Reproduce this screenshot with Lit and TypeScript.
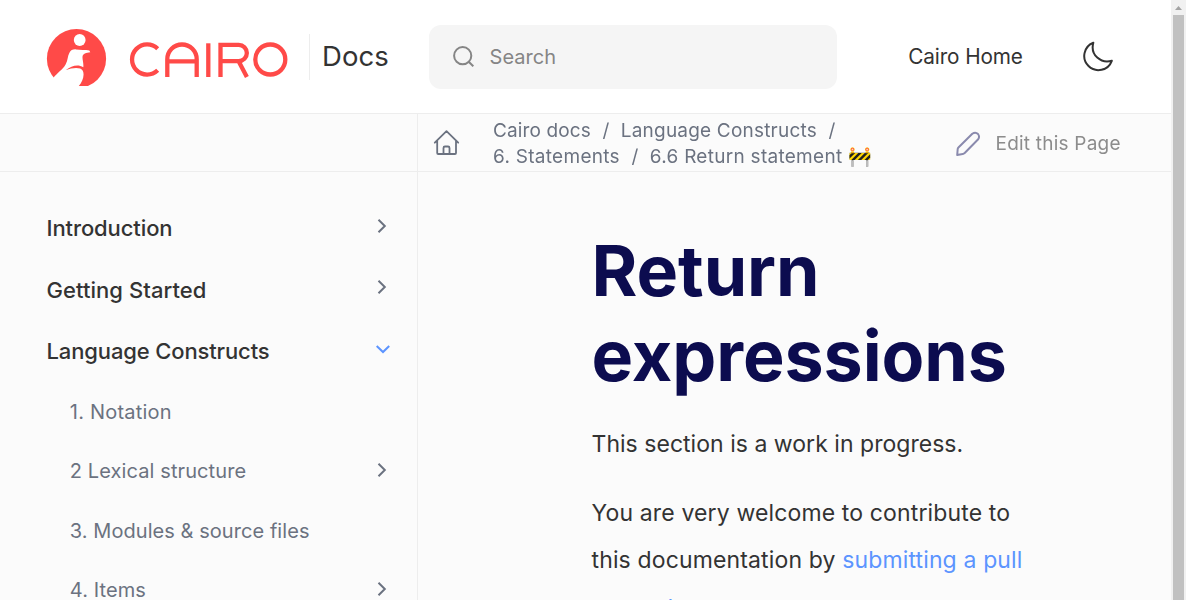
import { LitElement, html, css, svg } from "lit";
import { customElement } from "lit/decorators.js";
import { styleMap } from "lit/directives/style-map.js";

type NavItem = { label: string; level: 1 | 2; state?: "closed" | "open"; track: number };

const NAV: NavItem[] = [
  { label: "Introduction", level: 1, state: "closed", track: -0.1 },
  { label: "Getting Started", level: 1, state: "closed", track: 0.06 },
  { label: "Language Constructs", level: 1, state: "open", track: -0.13 },
  { label: "1. Notation", level: 2, track: 0.22 },
  { label: "2 Lexical structure", level: 2, state: "closed", track: 0.1 },
  { label: "3. Modules & source files", level: 2, track: 0.06 },
  { label: "4. Items", level: 2, state: "closed", track: 0.1 },
];

const logo = svg`
  <circle cx="30.500" cy="29.700" r="29.600" fill="#ff4a48"/>
  <path fill="#fff" d="M0 60L7.300 49C10.500 44.500 17 40.500 19.700 35.300C22 31 21.500 27 23.300 24C24.700 21 27 20.200 30 20.400C34 21.300 39.500 20.200 43.300 21.600L44.300 23.300C40 23.700 37 24.500 36.500 27.700C36.300 31 37.800 34.500 37.300 38.200C31.500 34.800 25.500 37 19.700 41.300C25 39 30.500 38.300 34.200 39.500C40 42 37.500 51.500 32.800 57V60Z"/>
  <circle cx="33.700" cy="11" r="5.900" fill="#fff"/>
  <g fill="none" stroke="#ff4a48" stroke-width="4.300">
    <path d="M111.700 19.700A15.100 15.100 0 1 0 111.700 41.300"/>
    <path d="M121.300 48V30.200A14.700 14.700 0 0 1 150.700 30.200V48M121.300 32.300H150.700"/>
    <path d="M162.300 14.300V48"/>
    <path d="M174.500 48V15.900H192.700A8.150 8.150 0 0 1 192.700 32.200H174.500M193 33L200.900 48"/>
    <circle cx="224.300" cy="30.500" r="15"/>
  </g>`;

@customElement("app-root")
export class AppRoot extends LitElement {
  static styles = css`
    :host {
      display: flex;
      height: 600px;
      overflow: hidden;
      font-family: Inter, sans-serif;
      color: #333;
      background: #fbfbfb;
    }
    * { box-sizing: border-box; }
    svg { display: block; flex: none; }
    a { color: inherit; text-decoration: none; }
    .page { width: 1171px; height: 600px; display: flex; flex-direction: column; }
    .header {
      height: 114px; flex: none; display: flex; align-items: center;
      background: #fff; border-bottom: 1px solid #ededed;
      padding-left: 46px;
    }
    .logo { margin-top: 2px; }
    .docs {
      margin-left: 21px; height: 46px; width: 120px; padding-left: 12px;
      border-left: 1px solid #ededed; font-size: 27.500px; line-height: 44px;
      letter-spacing: 0.1px; white-space: nowrap;
    }
    .search {
      width: 408px; height: 64px; border-radius: 12px; background: #f5f5f5;
      display: flex; align-items: center; padding-left: 24px; gap: 15.500px;
      color: #858585; font-size: 20px; letter-spacing: 0.05px;
    }
    .home { margin-left: 71.300px; width: 173.700px; font-size: 20.750px; letter-spacing: -0.12px; white-space: nowrap; }
    .moon { margin-bottom: 1px; }
    .body { flex: 1; min-height: 0; display: flex; }
    .side { width: 418px; flex: none; border-right: 1px solid #ededed; }
    .side-top { height: 58px; border-bottom: 1px solid #ededed; }
    .nav { padding: 25.500px 27px 0 46.500px; }
    .item {
      display: flex; justify-content: space-between; align-items: center;
      height: 61.500px; font-size: 22px; font-weight: 500; white-space: nowrap;
    }
    .item svg { margin-top: -5px; }
    .sub { height: 59.550px; padding-left: 23.300px; font-size: 20px; font-weight: 400; color: #6b7280; }
    .sub svg { margin-top: -3px; }
    .main { flex: 1; min-width: 0; }
    .toolbar {
      height: 58px; border-bottom: 1px solid #ededed; display: flex; align-items: center;
      padding-left: 15px; color: #6b7280; font-size: 19px; will-change: transform;
    }
    .crumbs { width: 462px; margin: 2px 0 0 32px; line-height: 26px; white-space: nowrap; }
    .c1 { letter-spacing: 0.13px; }
    .c2 { letter-spacing: 0.2px; }
    .c3 { letter-spacing: 0.28px; }
    .sep { margin: 0 11.500px; }
    .edit { display: flex; align-items: center; gap: 14.500px; color: #8c8c8c; letter-spacing: 0.22px; white-space: nowrap; }
    .edit span { margin-top: 2px; }
    .article { padding: 57px 120px 0 173.500px; }
    .title { margin: 0; font-size: 69.900px; line-height: 84.600px; font-weight: 700; color: #0c0c4f; letter-spacing: -0.05px; }
    .text { margin: 22px 0 0; font-size: 23px; line-height: 47px; letter-spacing: 0.14px; }
    .intro { margin-top: 23px; letter-spacing: 0.03px; }
    .link { color: #5c94ff; }
    .scroll { width: 15px; height: 600px; background: #f1f1f1; display: flex; flex-direction: column; align-items: center; }
    .thumb { width: 11px; flex: 1; background: #c1c1c1; }
  `;

  private chevron(state: "closed" | "open") {
    return state === "open"
      ? html`<svg width="16" height="16" viewBox="0 0 16 16"><path d="M2.700 5L9 11L15.200 5" fill="none" stroke="#5c94ff" stroke-width="2"/></svg>`
      : html`<svg width="16" height="16" viewBox="0 0 16 16"><path d="M4.500 1.800L10.800 8L4.500 14.200" fill="none" stroke="#6b7280" stroke-width="2"/></svg>`;
  }

  render() {
    return html`
      <div class="page">
        <header class="header">
          <svg class="logo" width="242" height="57" viewBox="0 0 242 57">${logo}</svg>
          <a class="docs">Docs</a>
          <div class="search">
            <svg width="21" height="21" viewBox="0 0 21 21" fill="none" stroke="#858585" stroke-width="2"><circle cx="9.700" cy="9.700" r="8.600"/><path d="M15.700 15.700L20.300 20.300"/></svg>
            <span>Search</span>
          </div>
          <a class="home">Cairo Home</a>
          <svg class="moon" width="32" height="32" viewBox="0 0 32 32" fill="none" stroke="#333" stroke-width="2" stroke-linejoin="round"><path d="M11.300 2.700A14.200 14.200 0 1 0 29.800 20.800C19 24 8 15 11.300 2.700Z"/></svg>
        </header>
        <div class="body">
          <aside class="side">
            <div class="side-top"></div>
            <nav class="nav">
              ${NAV.map((n) => html`<div class="item ${n.level === 2 ? "sub" : ""}"><span style=${styleMap({ letterSpacing: `${n.track}px` })}>${n.label}</span>${n.state ? this.chevron(n.state) : ""}</div>`)}
            </nav>
          </aside>
          <main class="main">
            <div class="toolbar">
              <svg width="28" height="28" viewBox="0 0 28 28" fill="none" stroke="#6b7280" stroke-width="1.800" stroke-linejoin="round" stroke-linecap="round"><path d="M1.800 13.700L13.500 2.200L25.200 13.700M4.200 11.500V24Q4.200 25 5.200 25H22Q23 25 23 24V11.500M10.500 25V19Q10.500 17.500 12 17.500H15Q16.500 17.500 16.500 19V25"/></svg>
              <div class="crumbs">
                <div><a class="c1">Cairo docs</a><span class="sep">/</span><a class="c2">Language Constructs</a><span class="sep">/</span></div>
                <div><a class="c3">6. Statements</a><span class="sep">/</span><a class="c3">6.6 Return statement 🚧</a></div>
              </div>
              <a class="edit">
                <svg width="26" height="26" viewBox="0 0 26 26" fill="none" stroke="#8a8aad" stroke-width="2" stroke-linejoin="round"><path d="M2.200 25L2.700 19Q2.900 18 3.700 17.200L17.300 3.700Q20.500 1.500 23 4Q25 6.500 23.200 9.300L9.700 23Q8.700 23.800 7.700 24.100Z"/></svg>
                <span>Edit this Page</span>
              </a>
            </div>
            <article class="article">
              <h1 class="title">Return expressions</h1>
              <p class="text intro">This section is a work in progress.</p>
              <p class="text">You are very welcome to contribute to this documentation by <a class="link">submitting a pull request</a>.</p>
            </article>
          </main>
        </div>
      </div>
      <div class="scroll">
        <svg width="15" height="15" viewBox="0 0 15 15"><path d="M4 10L7.500 6L11 10Z" fill="#a3a3a3"/></svg>
        <div class="thumb"></div>
      </div>`;
  }
}
